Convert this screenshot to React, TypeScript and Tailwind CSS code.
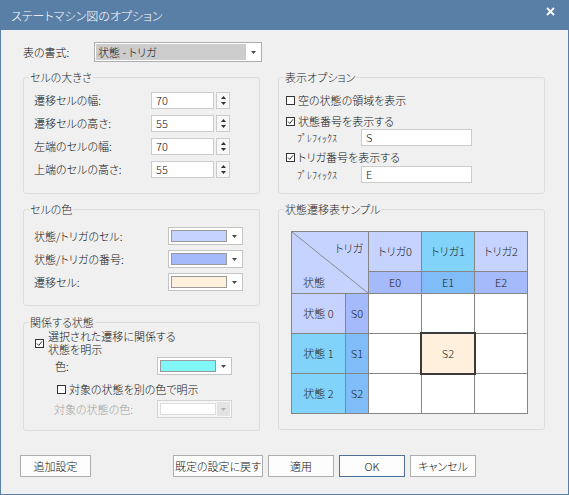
import React from "react";

const FONT = "font-['Noto_Sans_CJK_JP','Noto_Sans',sans-serif] [font-feature-settings:'palt'] font-light";

function Arrow({ color = "#4a4a4a" }: { color?: string }) {
  return (
    <svg width="5" height="3" viewBox="0 0 5 3">
      <path d="M0 0 L5 0 L2.5 3 Z" fill={color} />
    </svg>
  );
}

function Check({ checked }: { checked?: boolean }) {
  return (
    <span className="w-[9px] h-[9px] border border-[#333333] bg-white flex items-center justify-center shrink-0">
      {checked && (
        <svg width="7" height="7" viewBox="0 0 7 7">
          <path d="M1 3.6 L2.8 5.4 L6 1.4" stroke="#333333" strokeWidth="1" fill="none" />
        </svg>
      )}
    </span>
  );
}

function SpinInput({ value }: { value: string }) {
  return (
    <div className="flex gap-[2px]">
      <div className="w-[63px] h-[17px] border border-[#cccccc] bg-white pl-[4px] text-[11px] leading-[15px]">
        {value}
      </div>
      <div className="w-[14px] h-[17px] border border-[#cccccc] bg-[#f7f7f7] flex flex-col items-center justify-center gap-[3px]">
        <svg width="5" height="3" viewBox="0 0 5 3">
          <path d="M0 3 L5 3 L2.5 0 Z" fill="#333333" />
        </svg>
        <Arrow color="#333333" />
      </div>
    </div>
  );
}

function ColorCombo({ color, disabled }: { color: string; disabled?: boolean }) {
  return (
    <div
      className={
        "w-[75px] h-[18px] border flex items-center pl-[2px] pr-[1px] " +
        (disabled ? "border-[#d4d4d4] bg-[#f7f7f7]" : "border-[#c4c4c4] bg-white")
      }
    >
      <div
        className={"w-[56px] h-[12px] border " + (disabled ? "border-[#dcdcdc]" : "border-[#9a9a9a]")}
        style={{ backgroundColor: color }}
      />
      {disabled ? (
        <div className="ml-auto w-[13px] h-[14px] bg-[#e3e3e3] flex items-center justify-center">
          <Arrow color="#b0b0b0" />
        </div>
      ) : (
        <div className="ml-auto w-[13px] h-[14px] flex items-center justify-center">
          <Arrow />
        </div>
      )}
    </div>
  );
}

function Group({
  title,
  className,
  children,
}: {
  title: string;
  className: string;
  children: React.ReactNode;
}) {
  return (
    <fieldset className={"border border-[#dcdcdc] rounded-[3px] min-w-0 " + className}>
      <legend className="ml-[5px] px-[1px] text-[11px] leading-[14px] text-[#1e1e1e]">{title}</legend>
      {children}
    </fieldset>
  );
}

function Button({ label, w, primary }: { label: string; w: string; primary?: boolean }) {
  return (
    <div
      className={
        "h-[22px] border flex items-center justify-center text-[11px] bg-[#fdfdfd] " +
        w +
        (primary ? " border-[#4e6f96]" : " border-[#adadad]")
      }
    >
      {label}
    </div>
  );
}

function Cell({ bg, children, className = "" }: { bg: string; children?: React.ReactNode; className?: string }) {
  return (
    <div
      className={"flex items-center justify-center text-[11px] text-[#222222] " + className}
      style={{ backgroundColor: bg }}
    >
      {children}
    </div>
  );
}

export default function App() {
  const light = "#c5d3fe";
  const mid = "#a4bafb";
  const cyan = "#81d3f9";
  const cyanMid = "#80bdf8";
  return (
    <div className={"w-[569px] h-[495px] bg-[#f0f0f0] border border-[#5a7fa7] flex flex-col text-[#111111] " + FONT}>
      {/* Title bar */}
      <div className="h-[29px] bg-[#5a7fa7] flex items-center pl-[10px] pr-[13px] shrink-0">
        <span className="text-white text-[12px] leading-[14px]">ステートマシン図のオプション</span>
        <svg className="ml-auto -mt-[8px]" width="9" height="9" viewBox="0 0 9 9">
          <path d="M1 1 L8 8 M8 1 L1 8" stroke="white" strokeWidth="1.8" />
        </svg>
      </div>

      {/* Body */}
      <div className="pl-[22px] pt-[12px]">
        <div className="flex items-center h-[20px]">
          <span className="w-[71px] text-[11px]">表の書式:</span>
          <div className="w-[168px] h-[20px] border border-[#adadad] bg-white flex items-center p-[1px]">
            <div className="w-[150px] h-[16px] bg-[#cccccc] pl-[2px] text-[11px] leading-[16px]">状態 - トリガ</div>
            <div className="flex-1 flex items-center justify-center">
              <Arrow />
            </div>
          </div>
        </div>

        <div className="mt-[8px] grid grid-cols-[237px_267px] gap-x-[18px]">
          {/* Left column */}
          <div className="flex flex-col">
            <Group title="セルの大きさ" className="h-[124px]">
              <div className="pl-[10px] pt-[8px] flex flex-col gap-[6px] text-[11px]">
                {[
                  ["遷移セルの幅:", "70"],
                  ["遷移セルの高さ:", "55"],
                  ["左端のセルの幅:", "70"],
                  ["上端のセルの高さ:", "55"],
                ].map(([l, v]) => (
                  <div key={l} className="flex items-center">
                    <span className="w-[117px]">{l}</span>
                    <SpinInput value={v} />
                  </div>
                ))}
              </div>
            </Group>

            <Group title="セルの色" className="h-[104px] mt-[8px]">
              <div className="pl-[10px] pt-[11px] flex flex-col gap-[5px] text-[11px]">
                {[
                  ["状態/トリガのセル:", "#c5d3fe"],
                  ["状態/トリガの番号:", "#a3b9fa"],
                  ["遷移セル:", "#fff0dd"],
                ].map(([l, c]) => (
                  <div key={l} className="flex items-center">
                    <span className="w-[134px]">{l}</span>
                    <ColorCombo color={c} />
                  </div>
                ))}
              </div>
            </Group>

            <Group title="関係する状態" className="h-[116px] mt-[9px]">
              <div className="pl-[11px] pt-[1px] flex flex-col text-[11px]">
                <div className="flex items-center gap-[4px]">
                  <Check checked />
                  <div className="leading-[13px]">
                    <div>選択された遷移に関係する</div>
                    <div>状態を明示</div>
                  </div>
                </div>
                <div className="flex items-center mt-[1px] ml-[20px]">
                  <span className="w-[102px]">色:</span>
                  <ColorCombo color="#80f7f6" />
                </div>
                <div className="flex items-center gap-[3px] mt-[7px] ml-[22px] h-[14px]">
                  <Check />
                  <span>対象の状態を別の色で明示</span>
                </div>
                <div className="flex items-center mt-[4px] ml-[19px]">
                  <span className="w-[103px] text-[#a0a0a0]">対象の状態の色:</span>
                  <ColorCombo color="#ffffff" disabled />
                </div>
              </div>
            </Group>
          </div>

          {/* Right column */}
          <div className="flex flex-col">
            <Group title="表示オプション" className="h-[124px]">
              <div className="pl-[7px] flex flex-col text-[11px]">
                <div className="flex items-center gap-[3px] h-[14px] mt-[9px]">
                  <Check />
                  <span>空の状態の領域を表示</span>
                </div>
                <div className="flex items-center gap-[3px] h-[14px] mt-[7px]">
                  <Check checked />
                  <span>状態番号を表示する</span>
                </div>
                <div className="flex items-center mt-[1px] ml-[11px]">
                  <span className="w-[64px] text-[10px]">ﾌﾟﾚﾌｨｯｸｽ</span>
                  <div className="w-[111px] h-[17px] border border-[#cccccc] bg-white pl-[4px] leading-[15px]">S</div>
                </div>
                <div className="flex items-center gap-[3px] h-[14px] mt-[4px]">
                  <Check checked />
                  <span>トリガ番号を表示する</span>
                </div>
                <div className="flex items-center mt-[2px] ml-[11px]">
                  <span className="w-[64px] text-[10px]">ﾌﾟﾚﾌｨｯｸｽ</span>
                  <div className="w-[111px] h-[17px] border border-[#cccccc] bg-white pl-[4px] leading-[15px]">E</div>
                </div>
              </div>
            </Group>

            <Group title="状態遷移表サンプル" className="h-[228px] mt-[8px]">
              <div className="pl-[12px] pt-[15px]">
                <div className="w-[237px] grid grid-cols-[53px_22px_52px_52px_52px] grid-rows-[39px_21px_39px_39px_39px] gap-[1px] p-[1px] bg-[#858585]">
                  <div className="col-span-2 row-span-2 relative flex flex-col justify-between text-[11px] text-[#222222]" style={{ backgroundColor: light }}>
                    <svg className="absolute inset-0" width="76" height="61" viewBox="0 0 76 61">
                      <line x1="0" y1="0" x2="76" y2="61" stroke="#8a8a8a" strokeWidth="1" />
                    </svg>
                    <span className="self-end pr-[5px] pt-[9px] leading-[14px]">トリガ</span>
                    <span className="pl-[11px] pb-[4px] leading-[14px]">状態</span>
                  </div>
                  <Cell bg={light}>トリガ0</Cell>
                  <Cell bg={cyan}>トリガ1</Cell>
                  <Cell bg={light}>トリガ2</Cell>
                  <Cell bg={mid}>E0</Cell>
                  <Cell bg={cyanMid}>E1</Cell>
                  <Cell bg={mid}>E2</Cell>

                  <Cell bg={light}>状態 0</Cell>
                  <Cell bg={mid}>S0</Cell>
                  <Cell bg="#ffffff" />
                  <Cell bg="#ffffff" />
                  <Cell bg="#ffffff" />

                  <Cell bg={cyan}>状態 1</Cell>
                  <Cell bg={cyanMid}>S1</Cell>
                  <Cell bg="#ffffff" />
                  <Cell bg="#fff0dd" className="relative z-10 shadow-[0_0_0_2px_#3a3a3a]">S2</Cell>
                  <Cell bg="#ffffff" />

                  <Cell bg={cyan}>状態 2</Cell>
                  <Cell bg={cyanMid}>S2</Cell>
                  <Cell bg="#ffffff" />
                  <Cell bg="#ffffff" />
                  <Cell bg="#ffffff" />
                </div>
              </div>
            </Group>
          </div>
        </div>
      </div>

      {/* Buttons */}
      <div className="flex pl-[19px] mt-[24px]">
        <Button label="追加設定" w="w-[71px]" />
        <div className="flex gap-[5px] ml-[82px]">
          <Button label="既定の設定に戻す" w="w-[90px]" />
          <Button label="適用" w="w-[66px]" />
          <Button label="OK" w="w-[66px]" primary />
          <Button label="キャンセル" w="w-[66px]" />
        </div>
      </div>
    </div>
  );
}
